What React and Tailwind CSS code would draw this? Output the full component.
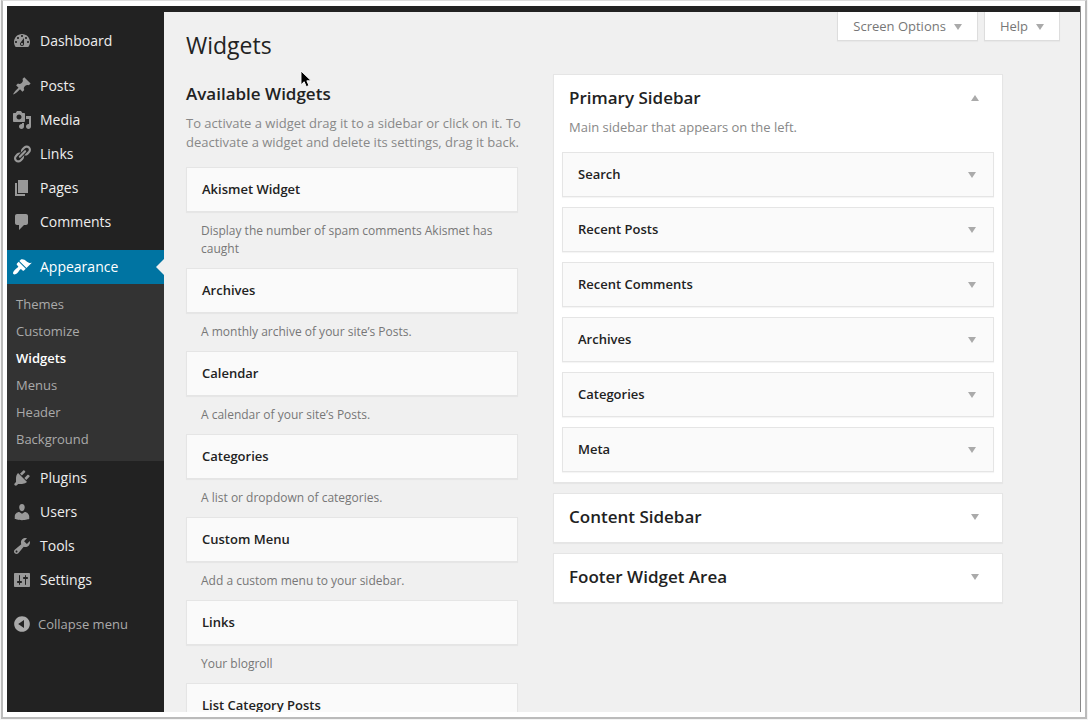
import React from "react";

const ICONS = {
  dashboard:
    "M3.76 16h12.48c1.1-1.37 1.76-3.11 1.76-5 0-4.42-3.58-8-8-8s-8 3.58-8 8c0 1.89.66 3.63 1.76 5zM10 4c.55 0 1 .45 1 1s-.45 1-1 1-1-.45-1-1 .45-1 1-1zM6 6c.55 0 1 .45 1 1s-.45 1-1 1-1-.45-1-1 .45-1 1-1zm8 0c.55 0 1 .45 1 1s-.45 1-1 1-1-.45-1-1 .45-1 1-1zm-5.37 5.55L12 7v6c0 1.1-.9 2-2 2s-2-.9-2-2c0-.57.24-1.08.63-1.45zM4 10c.55 0 1 .45 1 1s-.45 1-1 1-1-.45-1-1 .45-1 1-1zm12 0c.55 0 1 .45 1 1s-.45 1-1 1-1-.45-1-1 .45-1 1-1zm-5 3c0-.55-.45-1-1-1s-1 .45-1 1 .45 1 1 1 1-.45 1-1z",
  posts:
    "M10.44 3.02l1.82-1.82 6.36 6.35-1.83 1.82c-1.05-.68-2.48-.57-3.41.36l-.75.75c-.92.93-1.04 2.35-.35 3.41l-1.83 1.82-2.41-2.41-2.8 2.79c-.42.42-3.38 2.71-3.8 2.29s1.86-3.39 2.28-3.81l2.79-2.79L4.1 9.36l1.83-1.82c1.05.69 2.48.57 3.4-.36l.75-.75c.93-.92 1.05-2.35.36-3.41z",
  media:
    "M13 11V4c0-.55-.45-1-1-1h-1.67L9 1H5L3.67 3H2c-.55 0-1 .45-1 1v7c0 .55.45 1 1 1h10c.55 0 1-.45 1-1zM7 4.5c1.38 0 2.5 1.12 2.5 2.5S8.38 9.5 7 9.5 4.5 8.38 4.5 7 5.62 4.5 7 4.5zM14 6h5v10.5c0 1.38-1.12 2.5-2.5 2.5S14 17.88 14 16.5s1.12-2.5 2.5-2.5c.17 0 .34.02.5.05V9h-3V6zm-4 8.05V13h2v3.5c0 1.38-1.12 2.5-2.5 2.5S7 17.88 7 16.5 8.12 14 9.5 14c.17 0 .34.02.5.05z",
  links:
    "M17.74 2.76c1.68 1.69 1.68 4.41 0 6.1l-1.53 1.52c-1.12 1.12-2.7 1.47-4.14 1.09l2.62-2.61.76-.77.76-.76c.84-.84.84-2.2 0-3.04-.84-.85-2.2-.85-3.04 0l-.77.76-3.38 3.38c-.37-1.44-.02-3.02 1.1-4.14l1.52-1.53c1.69-1.68 4.42-1.68 6.1 0zM8.59 13.43l5.34-5.34c.42-.42.42-1.1 0-1.52-.44-.43-1.13-.39-1.53 0l-5.33 5.34c-.42.42-.42 1.1 0 1.52.44.43 1.13.39 1.52 0zm-.76 2.29l4.14-4.15c.38 1.44.03 3.02-1.09 4.14l-1.52 1.53c-1.69 1.68-4.41 1.68-6.1 0-1.68-1.68-1.68-4.42 0-6.1l1.53-1.52c1.12-1.12 2.7-1.47 4.14-1.1l-4.14 4.15c-.85.84-.85 2.2 0 3.05.84.84 2.2.84 3.04 0z",
  pages: "M6 15V2h10v13H6zm-1 1h8v2H3V5h2v11z",
  comments:
    "M5 2h9c1.1 0 2 .9 2 2v7c0 1.1-.9 2-2 2h-2l-5 5v-5H5c-1.1 0-2-.9-2-2V4c0-1.1.9-2 2-2z",
  appearance:
    "M14.48 11.06L7.41 3.99l1.5-1.5c.5-.56 2.3-.47 3.51.32 1.21.8 1.43 1.28 2.91 2.1 1.18.64 2.45 1.26 4.45.85zm-.71.71L6.7 4.7 4.93 6.47c-.39.39-.39 1.02 0 1.41l1.06 1.06c.39.39.39 1.03 0 1.42-.6.6-1.43 1.11-2.21 1.69-.35.26-.7.53-1.01.84C1.43 14.23.4 16.08 1.4 17.07c.99 1 2.84-.03 4.18-1.36.31-.31.58-.66.85-1.02.57-.78 1.08-1.61 1.69-2.21.39-.39 1.02-.39 1.41 0l1.06 1.06c.39.39 1.02.39 1.41 0z",
  plugins:
    "M13.11 4.36L9.87 7.6 8 5.73l3.24-3.24c.35-.34 1.05-.2 1.56.32.52.51.66 1.21.31 1.55zm-8 1.77l.91-1.12 9.01 9.01-1.19.84c-.71.71-2.63 1.16-3.82 1.16H6.14L4.9 17.26c-.59.59-1.54.59-2.12 0-.59-.58-.59-1.53 0-2.12l1.24-1.24v-3.88c0-1.13.4-3.19 1.09-3.89zm7.26 3.97l3.24-3.24c.34-.35 1.04-.21 1.55.31.52.51.66 1.21.31 1.55l-3.24 3.25z",
  users:
    "M10 9.25c-2.27 0-2.73-3.44-2.73-3.44C7 4.02 7.82 2 9.97 2c2.16 0 2.98 2.02 2.71 3.81 0 0-.41 3.44-2.68 3.44zm0 2.57L12.72 10c2.39 0 4.52 2.33 4.52 4.53v2.49s-3.65 1.13-7.24 1.13c-3.65 0-7.24-1.13-7.24-1.13v-2.49c0-2.25 1.94-4.48 4.47-4.48z",
  tools:
    "M16.68 9.77c-1.34 1.34-3.3 1.67-4.95.99l-5.41 6.52c-.99.99-2.59.99-3.58 0s-.99-2.59 0-3.57l6.52-5.42c-.68-1.65-.35-3.61.99-4.95 1.28-1.28 3.12-1.62 4.72-1.06l-2.89 2.89 2.82 2.82 2.86-2.87c.53 1.58.18 3.39-1.08 4.65zM3.81 16.21c.4.39 1.04.39 1.43 0 .4-.4.4-1.04 0-1.43-.39-.4-1.03-.4-1.43 0-.39.39-.39 1.03 0 1.43z",
  settings:
    "M18 16V4c0-.55-.45-1-1-1H3c-.55 0-1 .45-1 1v12c0 .55.45 1 1 1h14c.55 0 1-.45 1-1zM8 11h1c.55 0 1 .45 1 1s-.45 1-1 1H8v1.5c0 .28-.22.5-.5.5s-.5-.22-.5-.5V13H6c-.55 0-1-.45-1-1s.45-1 1-1h1V5.5c0-.28.22-.5.5-.5s.5.22.5.5V11zm5-2h-1c-.55 0-1-.45-1-1s.45-1 1-1h1V5.5c0-.28.22-.5.5-.5s.5.22.5.5V7h1c.55 0 1 .45 1 1s-.45 1-1 1h-1v5.5c0 .28-.22.5-.5.5s-.5-.22-.5-.5V9z",
  collapse:
    "M10 2.16c4.33 0 7.84 3.51 7.84 7.84s-3.51 7.84-7.84 7.84S2.16 14.33 2.16 10 5.71 2.16 10 2.16zm2 11.72V6.12L6.18 9.97z",
};

const CONTENT_MENU = [
  ["posts", "Posts"],
  ["media", "Media"],
  ["links", "Links"],
  ["pages", "Pages"],
  ["comments", "Comments"],
];

const ADMIN_MENU = [
  ["plugins", "Plugins"],
  ["users", "Users"],
  ["tools", "Tools"],
  ["settings", "Settings"],
];

const APPEARANCE_MENU = ["Themes", "Customize", "Widgets", "Menus", "Header", "Background"];

const AVAILABLE = [
  ["Akismet Widget", "Display the number of spam comments Akismet has caught"],
  ["Archives", "A monthly archive of your site’s Posts."],
  ["Calendar", "A calendar of your site’s Posts."],
  ["Categories", "A list or dropdown of categories."],
  ["Custom Menu", "Add a custom menu to your sidebar."],
  ["Links", "Your blogroll"],
  ["List Category Posts"],
];

const PRIMARY = ["Search", "Recent Posts", "Recent Comments", "Archives", "Categories", "Meta"];

function Icon({ name }) {
  return (
    <svg viewBox="0 0 20 20" className="size-5 shrink-0 fill-current" aria-hidden="true">
      <path fillRule="evenodd" d={ICONS[name]} />
    </svg>
  );
}

function Arrow({ up }) {
  return (
    <svg viewBox="0 0 8 6" className="h-1.5 w-2 shrink-0 fill-[#aaa]" aria-hidden="true">
      <path d={up ? "M0 6h8L4 0z" : "M0 0h8L4 6z"} />
    </svg>
  );
}

function MenuItem({ icon, label }) {
  return (
    <li>
      <a href="#" className="flex h-[34px] items-center gap-2 pl-[5px] text-[#eee]">
        <span className="flex text-[#999]">
          <Icon name={icon} />
        </span>
        {label}
      </a>
    </li>
  );
}

function SideMenu() {
  return (
    <nav className="w-[157px] shrink-0 bg-[#222] pt-3 text-sm">
      <ul>
        <MenuItem icon="dashboard" label="Dashboard" />
      </ul>
      <ul className="mt-[11px]">
        {CONTENT_MENU.map(([icon, label]) => (
          <MenuItem key={label} icon={icon} label={label} />
        ))}
      </ul>
      <a
        href="#"
        className="relative mt-[11px] flex h-[34px] items-center gap-2 bg-[#0074a2] pl-[5px] text-white"
      >
        <Icon name="appearance" />
        Appearance
        <svg viewBox="0 0 8 16" className="absolute right-0 h-4 w-2 fill-[#f0f0f0]" aria-hidden="true">
          <path d="M8 0v16L0 8z" />
        </svg>
      </a>
      <ul className="bg-[#333] pt-[7px] pb-2 text-[13px]">
        {APPEARANCE_MENU.map((label) => (
          <li key={label}>
            <a
              href="#"
              className={
                label === "Widgets"
                  ? "flex h-[27px] items-center pl-[9px] font-semibold text-white"
                  : "flex h-[27px] items-center pl-[9px] text-[#aaa]"
              }
            >
              {label}
            </a>
          </li>
        ))}
      </ul>
      <ul>
        {ADMIN_MENU.map(([icon, label]) => (
          <MenuItem key={label} icon={icon} label={label} />
        ))}
      </ul>
      <button className="mt-2.5 flex h-[34px] items-center gap-1.5 pl-[5px] text-[13px] text-[#aaa]">
        <Icon name="collapse" />
        Collapse menu
      </button>
    </nav>
  );
}

function ScreenTab({ label }) {
  return (
    <button className="flex h-[29px] items-center gap-2 border border-t-0 border-[#ddd] bg-white pt-0.5 pr-[15px] pl-[15px] text-[13px] text-[#777] shadow-[0_1px_1px_rgba(0,0,0,0.03)]">
      {label}
      <Arrow />
    </button>
  );
}

function AvailableWidgets() {
  return (
    <section className="pt-2">
      <h2 className="text-[17px] leading-6 font-semibold text-[#222]">Available Widgets</h2>
      <p className="-mr-3 mt-2 mb-[15px] text-[13px] leading-[19px] text-[#888]">
        To activate a widget drag it to a sidebar or click on it. To deactivate a widget and delete
        its settings, drag it back.
      </p>
      {AVAILABLE.map(([name, text]) => (
        <div key={name}>
          <h3 className="flex h-[45px] items-center border border-[#e5e5e5] bg-[#fafafa] px-[15px] text-[13px] font-semibold text-[#222] shadow-[0_1px_1px_rgba(0,0,0,0.04)]">
            {name}
          </h3>
          {text && <p className="px-[15px] py-2.5 text-xs leading-[18px] text-[#777]">{text}</p>}
        </div>
      ))}
    </section>
  );
}

function SidebarHead({ label, up }) {
  return (
    <button className="flex h-12 w-full items-center justify-between pr-[23px] pb-0.5 pl-[15px]">
      <span className="text-[17px] font-semibold text-[#222]">{label}</span>
      <Arrow up={up} />
    </button>
  );
}

const PANEL = "border border-[#e5e5e5] bg-white shadow-[0_1px_1px_rgba(0,0,0,0.04)]";

function Sidebars() {
  return (
    <div className="flex flex-col gap-2.5">
      <section className={PANEL}>
        <SidebarHead label="Primary Sidebar" up />
        <p className="-mt-[5px] pl-[15px] text-[13px] leading-[19px] text-[#888]">
          Main sidebar that appears on the left.
        </p>
        <ul className="flex flex-col gap-2.5 px-2 pt-[15px] pb-2.5">
          {PRIMARY.map((name) => (
            <li key={name}>
              <button className="flex h-[45px] w-full items-center justify-between border border-[#e5e5e5] bg-[#fafafa] pr-[17px] pl-[15px] text-[13px] font-semibold text-[#222] shadow-[0_1px_1px_rgba(0,0,0,0.04)]">
                {name}
                <Arrow />
              </button>
            </li>
          ))}
        </ul>
      </section>
      <section className={PANEL}>
        <SidebarHead label="Content Sidebar" />
      </section>
      <section className={PANEL}>
        <SidebarHead label="Footer Widget Area" />
      </section>
    </div>
  );
}

function Cursor() {
  return (
    <svg
      viewBox="0 0 12 19"
      className="pointer-events-none absolute top-[58px] left-[136px] h-[18px] w-3"
      aria-hidden="true"
    >
      <path d="M.7 1v14.6l3.4-3.2 2.2 5.2 2.8-1.2-2.2-5h4.6z" fill="#000" stroke="#fff" />
    </svg>
  );
}

export default function App() {
  return (
    <div className="h-screen bg-[#f4f4f4] px-px pb-px font-['Open_Sans',sans-serif]">
      <div className="flex h-full flex-col border-x-2 border-t border-b-2 border-[#bbb] border-t-[#ddd] bg-white px-1 pt-[5px] pb-[5px]">
        <div className="flex min-h-0 flex-1 flex-col overflow-hidden border-r border-[#888]">
          <div className="h-1.5 shrink-0 bg-[#222]" />
          <div className="flex min-h-0 flex-1">
            <SideMenu />
            <main className="relative min-w-0 flex-1 overflow-hidden bg-[#f0f0f0] pr-[77px] pl-[22px]">
              <div className="flex items-start justify-between">
                <h1 className="pt-[17px] text-[23px] leading-8 text-[#222]">Widgets</h1>
                <div className="-mr-[57px] flex gap-1.5">
                  <ScreenTab label="Screen Options" />
                  <ScreenTab label="Help" />
                </div>
              </div>
              <div className="mt-[13px] grid grid-cols-[332fr_450fr] items-start gap-[35px]">
                <AvailableWidgets />
                <Sidebars />
              </div>
              <Cursor />
            </main>
          </div>
        </div>
      </div>
    </div>
  );
}
